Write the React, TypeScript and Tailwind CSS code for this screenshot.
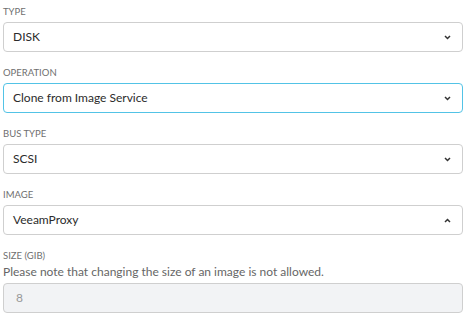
import React from 'react'

function Chevron({ up }: { up?: boolean }) {
    return (
        <svg width="7" height="5" viewBox="0 0 7 5" className="text-[#333]">
            <path
                d={up ? 'M1 4 L3.5 1.5 L6 4' : 'M1 1 L3.5 3.5 L6 1'}
                fill="none"
                stroke="currentColor"
                strokeWidth="1.5"
            />
        </svg>
    )
}

function SelectField({ label, value, focused, up }: { label: string; value: string; focused?: boolean; up?: boolean }) {
    return (
        <div className="mb-[14px]">
            <div className="mb-[3px] text-[9.5px] leading-[14px] uppercase text-[#6f6f6f]">{label}</div>
            <div
                className={`flex h-[30px] items-center justify-between rounded-[4px] border bg-white pl-[9px] pr-[11px] ${
                    focused ? 'border-[#52c3e6]' : 'border-[#cfcfcf]'
                }`}
            >
                <span className="text-[12px] text-[#2b2b2b]">{value}</span>
                <Chevron up={up} />
            </div>
        </div>
    )
}

export default function App() {
    return (
        <div className="w-[468px] bg-white px-[3px] pt-[5px] font-['Lato','Open_Sans',sans-serif]">
            <div className="w-[460px]">
                <SelectField label="Type" value="DISK" />
                <SelectField label="Operation" value="Clone from Image Service" focused />
                <SelectField label="Bus Type" value="SCSI" />
                <SelectField label="Image" value="VeeamProxy" up />
                <div>
                    <div className="text-[9.5px] leading-[14px] uppercase text-[#6f6f6f]">Size (GiB)</div>
                    <div className="mt-[1px] mb-[3px] text-[12px] leading-[16px] text-[#666]">
                        Please note that changing the size of an image is not allowed.
                    </div>
                    <div className="flex h-[30px] items-center rounded-[4px] border border-[#cfcfcf] bg-[#f2f3f5] pl-[12px] text-[12px] text-[#999]">
                        8
                    </div>
                </div>
            </div>
        </div>
    )
}
